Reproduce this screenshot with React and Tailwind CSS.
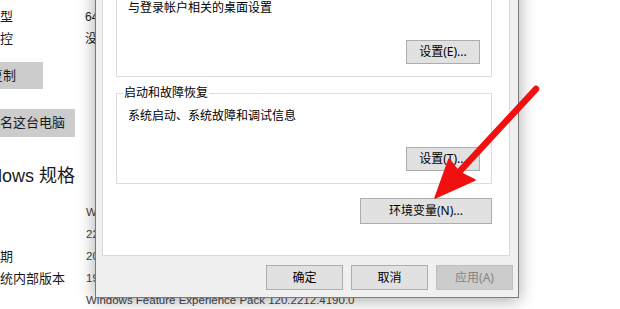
import React from "react";

const page = "font-['Liberation_Sans','Noto_Sans_CJK_SC',sans-serif]";
const ui = "font-['Noto_Sans','Noto_Sans_CJK_SC',sans-serif]";

const specRows = [
  ["版本", "Windows 10 家庭中文版"],
  ["版本号", "22H2"],
  ["安装日期", "2020/12/8"],
  ["操作系统内部版本", "19045.2486"],
  ["体验", "Windows Feature Experience Pack 120.2212.4190.0"],
];

// classic win32 push button
const WinButton = ({ children, className = "", disabled = false }) => (
  <div
    className={`flex items-center justify-center border text-[12px] leading-none ${
      disabled
        ? "bg-[#cccccc] border-[#bfbfbf] text-[#838383]"
        : "bg-[#e1e1e1] border-[#adadad] text-black"
    } ${className}`}
  >
    {children}
  </div>
);

const App = () => {
  return (
    <div className={`relative w-[620px] h-[309px] overflow-hidden bg-white ${page}`}>
      {/* Settings page behind the dialog */}
      <div className="ml-[-39px] pt-[6px] flex flex-col text-[13px] text-[#1a1a1a]">
        <div className="flex h-[22px] items-center">
          <span className="w-[124px] shrink-0">系统类型</span>
          <span className="whitespace-nowrap text-[12px]">64 位操作系统, 基于 x64 的处理器</span>
        </div>
        <div className="flex h-[22px] items-center">
          <span className="w-[124px] shrink-0">笔和触控</span>
          <span className="whitespace-nowrap text-[12px]">没有可用于此显示器的笔或触控输入</span>
        </div>

        <div className="mt-[12px] w-[82px] h-[27px] pl-[29px] flex items-center bg-[#cccccc]">复制</div>
        <div className="mt-[20px] w-[114px] h-[28px] pl-[13px] flex items-center bg-[#cccccc] whitespace-nowrap">
          重命名这台电脑
        </div>

        <div className="mt-[25px] h-[28px] flex items-center text-[18px] whitespace-nowrap">
          Windows 规格
        </div>

        <div className="mt-[12px] flex flex-col">
          {specRows.map(([label, value]) => (
            <div key={label} className="flex h-[22px] items-center">
              <span className="w-[125px] shrink-0 whitespace-nowrap">{label}</span>
              <span className="whitespace-nowrap text-[11.5px] text-[#444]">{value}</span>
            </div>
          ))}
        </div>
      </div>

      {/* System properties dialog (window on the desktop) */}
      <div
        className={`absolute left-[95px] top-[-40px] w-[424px] h-[338px] flex flex-col border border-[#7a7a7a] bg-[#f0f0f0] shadow-[0_2px_16px_rgba(0,0,0,0.35)] ${ui}`}
      >
        {/* tab page */}
        <div className="ml-[6px] w-[408px] h-[295px] border border-[#d9d9d9] bg-white pl-[13px] flex flex-col text-[12px] text-black">
          <div className="w-[376px] h-[115px] border border-t-0 border-[#dcdcdc] flex flex-col pl-[11px] pr-[11px] pt-[38px]">
            <div className="leading-[16px]">与登录帐户相关的桌面设置</div>
            <div className="mt-[24px] flex justify-end">
              <WinButton className="w-[74px] h-[24px]">设置(E)...</WinButton>
            </div>
          </div>

          <div className="relative mt-[16px] w-[376px] h-[91px] border border-[#dcdcdc] flex flex-col pl-[11px] pr-[11px] pt-[14px]">
            <span className="absolute left-[6px] top-[-9px] bg-white px-[1px] leading-[16px]">启动和故障恢复</span>
            <div className="leading-[16px]">系统启动、系统故障和调试信息</div>
            <div className="mt-[23px] flex justify-end">
              <WinButton className="w-[74px] h-[24px]">设置(T)...</WinButton>
            </div>
          </div>

          <div className="mt-[14px] w-[376px] flex justify-end">
            <WinButton className="w-[132px] h-[26px]">环境变量(N)...</WinButton>
          </div>
        </div>

        {/* dialog buttons */}
        <div className="mt-[9px] flex justify-end gap-[8px] pr-[5px]">
          <WinButton className="w-[77px] h-[25px]">确定</WinButton>
          <WinButton className="w-[77px] h-[25px]">取消</WinButton>
          <WinButton className="w-[77px] h-[25px]" disabled>应用(A)</WinButton>
        </div>
      </div>

      {/* red annotation arrow */}
      <svg className="absolute left-0 top-0" width="620" height="309" viewBox="0 0 620 309">
        <line x1="536" y1="89" x2="460" y2="171" stroke="#f01010" strokeWidth="6.5" strokeLinecap="round" />
        <polygon points="435,198 449,159 459,172 475,180" fill="#f01010" stroke="#f01010" strokeWidth="1.5" strokeLinejoin="round" />
      </svg>
    </div>
  );
};

export default App;
